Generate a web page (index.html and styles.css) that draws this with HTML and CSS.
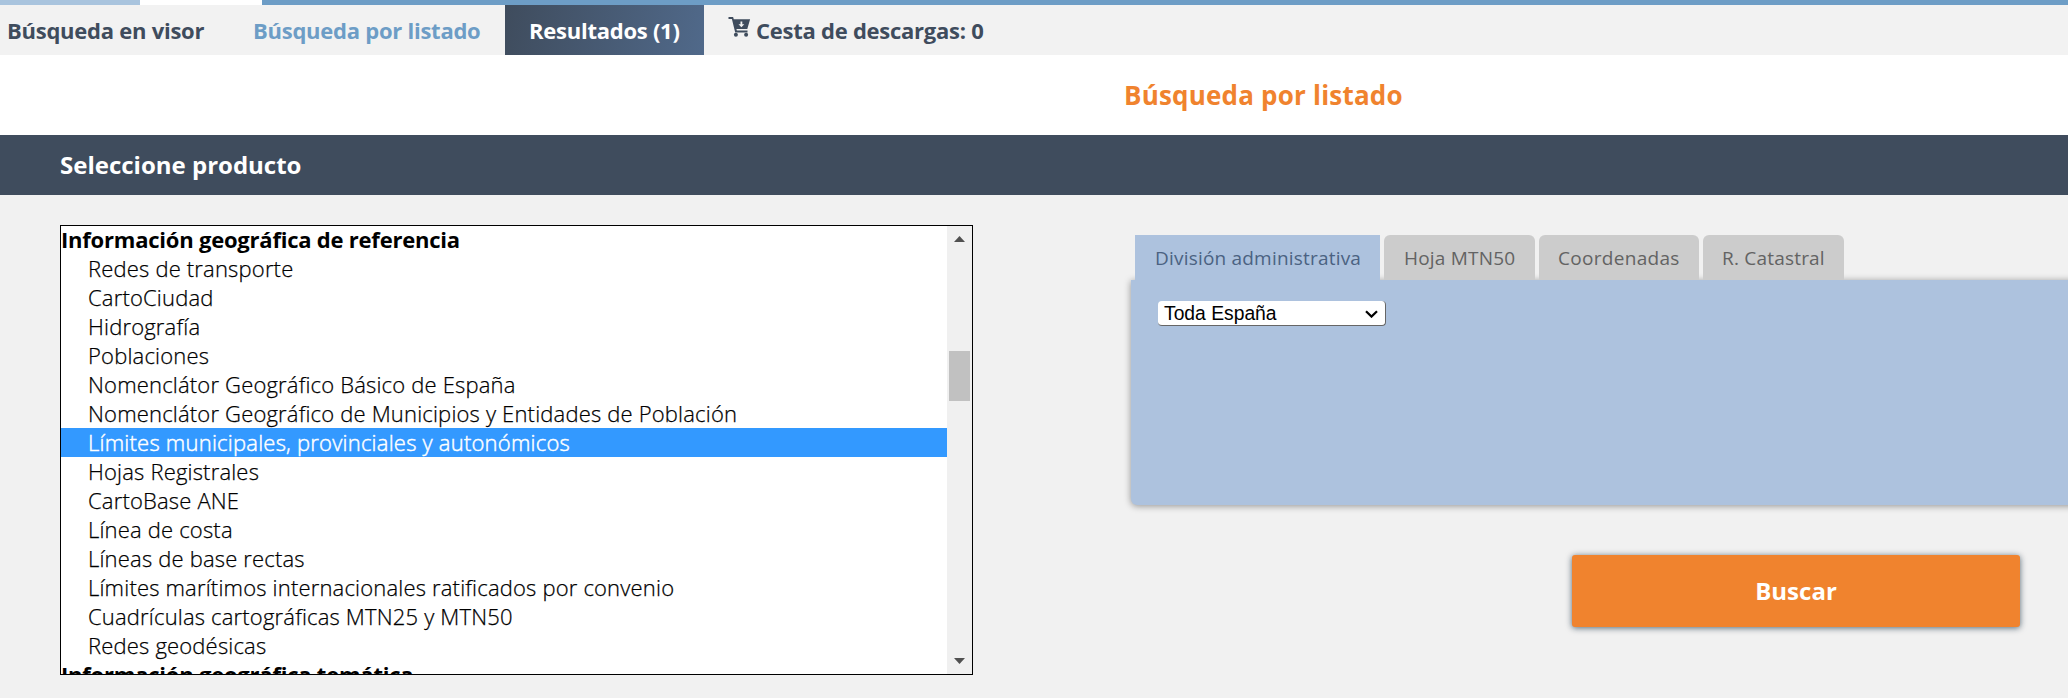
FILE: index.html
```html
<!DOCTYPE html>
<html lang="es">
<head>
<meta charset="utf-8">
<title>Búsqueda por listado</title>
<link rel="stylesheet" href="styles.css">
</head>
<body>
<div class="strip"><span class="strip-light"></span><span class="strip-white"></span></div>
<nav class="nav">
  <a class="nav-item nav-first"><span>Búsqueda en visor</span></a>
  <a class="nav-item nav-active"><span>Búsqueda por listado</span></a>
  <a class="nav-item nav-results"><span>Resultados (1)</span></a>
  <a class="nav-item nav-cart">
    <svg class="cart" viewBox="0 0 22 20" aria-hidden="true">
      <path d="M0 0H4.6L5.3 2.2H21.6L18.8 12H7.9L8.4 13.6H19V15.4H6.7L3.4 2H0Z" fill="currentColor"/>
      <circle cx="7.4" cy="17.8" r="2" fill="currentColor"/>
      <circle cx="17.6" cy="17.8" r="2" fill="currentColor"/>
      <path d="M12 4.6H13.8V7.2H15.8L12.9 10.3L10 7.2H12Z" fill="#f2f2f2"/>
    </svg>
    <span>Cesta de descargas: 0</span>
  </a>
</nav>
<header class="title-row"><h1 class="title">Búsqueda por listado</h1></header>
<div class="bar"><h2 class="bar-title">Seleccione producto</h2></div>
<main class="content">
  <div class="listbox">
    <ul class="options">
      <li class="group">Información geográfica de referencia</li>
      <li class="option">Redes de transporte</li>
      <li class="option">CartoCiudad</li>
      <li class="option">Hidrografía</li>
      <li class="option">Poblaciones</li>
      <li class="option">Nomenclátor Geográfico Básico de España</li>
      <li class="option">Nomenclátor Geográfico de Municipios y Entidades de Población</li>
      <li class="option selected">Límites municipales, provinciales y autonómicos</li>
      <li class="option">Hojas Registrales</li>
      <li class="option">CartoBase ANE</li>
      <li class="option">Línea de costa</li>
      <li class="option">Líneas de base rectas</li>
      <li class="option">Límites marítimos internacionales ratificados por convenio</li>
      <li class="option">Cuadrículas cartográficas MTN25 y MTN50</li>
      <li class="option">Redes geodésicas</li>
      <li class="group">Información geográfica temática</li>
    </ul>
    <div class="scrollbar">
      <svg class="arrow" viewBox="0 0 11 6"><path d="M5.5 0L11 6H0Z" fill="#505050"/></svg>
      <div class="thumb"></div>
      <svg class="arrow arrow-down" viewBox="0 0 11 6"><path d="M0 0H11L5.5 6Z" fill="#505050"/></svg>
    </div>
  </div>
  <section class="search">
    <div class="tabs">
      <a class="tab tab-division">División administrativa</a>
      <a class="tab tab-hoja">Hoja MTN50</a>
      <a class="tab tab-coord">Coordenadas</a>
      <a class="tab tab-catastral">R. Catastral</a>
    </div>
    <div class="panel">
      <div class="select"><span>Toda España</span>
        <svg class="chevron" viewBox="0 0 13 8"><path d="M1 1.2L6.5 6.6L12 1.2" fill="none" stroke="#000" stroke-width="2.2"/></svg>
      </div>
    </div>
    <button class="submit">Buscar</button>
  </section>
</main>
</body>
</html>
```
FILE: styles.css
```css
* { box-sizing: border-box; }
body {
  margin: 0;
  width: 2068px;
  height: 698px;
  overflow: hidden;
  background: #f1f1f1;
  font-family: "Open Sans", "Noto Sans", sans-serif;
  color: #3f4c5d;
}
.strip { display: flex; height: 5px; background: #6d9dc6; }
.strip-light { width: 140px; background: #a9c4de; }
.strip-white { width: 122px; background: #fff; }
.nav { display: flex; height: 50px; background: #f2f2f2; font-size: 22px; font-weight: 700; letter-spacing: -.25px; line-height: 50px; white-space: nowrap; }
.nav-first { width: 229px; padding-left: 7px; }
.nav-active { width: 276px; padding-left: 24px; color: #6d9dc6; }
.nav-results { width: 199px; padding-left: 24px; color: #fff; background: linear-gradient(100deg, #3f4c5d, #50698a); }
.nav-cart { display: flex; gap: 5px; padding-left: 24px; }
.cart { width: 23px; height: 20px; margin-top: 12px; }
.title-row { height: 80px; background: #fff; padding-left: 1124px; }
.title { margin: 0; font-size: 26px; font-weight: 700; letter-spacing: .2px; line-height: 81px; color: #f0832e; white-space: nowrap; }
.bar { height: 60px; background: #3f4c5d; padding-left: 60px; }
.bar-title { margin: 0; font-size: 24px; font-weight: 700; line-height: 60px; color: #fff; }
.content { display: flex; padding: 30px 0 0 60px; gap: 158px; }
.listbox { display: flex; width: 913px; height: 450px; flex: none; border: 1px solid #000; background: #fff; overflow: hidden; }
.options { flex: 1; list-style: none; margin: -1px 0 0; padding: 0; color: #000; font-size: 22px; line-height: 29px; white-space: nowrap; }
.group { height: 29px; font-weight: 700; letter-spacing: -.22px; }
.option { height: 29px; font-weight: 300; letter-spacing: .18px; -webkit-text-stroke: .25px currentColor; padding-left: 27px; }
.selected { background: #3399ff; color: #fff; letter-spacing: .22px; -webkit-text-stroke-width: .45px; }
.scrollbar { width: 25px; background: #f0f0f0; display: flex; flex-direction: column; align-items: center; padding: 10px 0; }
.arrow { width: 11px; height: 6px; }
.thumb { width: 21px; height: 50px; margin-top: 109px; background: #c1c1c1; }
.arrow-down { margin-top: auto; }
.search { flex: 1; padding-top: 10px; }
.tabs { display: flex; gap: 4px; padding-left: 4px; position: relative; z-index: 0; }
.tab { height: 45px; padding-left: 20px; line-height: 46px; font-size: 19px; letter-spacing: .2px; color: #636363; background: #ccc; border-radius: 6px 6px 0 0; white-space: nowrap; }
.tab-division { width: 245px; background: #adc2de; color: #4b6282; border-radius: 0; position: relative; z-index: 2; }
.tab-hoja { width: 151px; }
.tab-coord { width: 160px; padding-left: 19px; letter-spacing: .3px; }
.tab-catastral { width: 141px; padding-left: 19px; }
.panel { width: 960px; height: 225px; padding: 21px 27px; background: #adc2de; border-radius: 0 0 6px 6px; box-shadow: 0 1px 7px rgba(0,0,0,.4); }
.select { display: flex; align-items: center; justify-content: space-between; width: 228px; height: 25px; padding: 1px 7px 0 6px; background: #fff; border-radius: 4px; border-right: 1px solid #666; border-bottom: 1px solid #666; font-family: "Liberation Sans", Arial, sans-serif; font-size: 19.3px; color: #000; }
.chevron { width: 13px; height: 8px; }
.submit { display: block; width: 448px; height: 72px; margin: 50px 0 0 441px; padding: 0 0 2px; border: 0; border-radius: 3px; background: #f0832e; color: #fff; font: 700 24px "Open Sans", "Noto Sans", sans-serif; box-shadow: 0 1px 6px rgba(0,30,50,.65); }
```
